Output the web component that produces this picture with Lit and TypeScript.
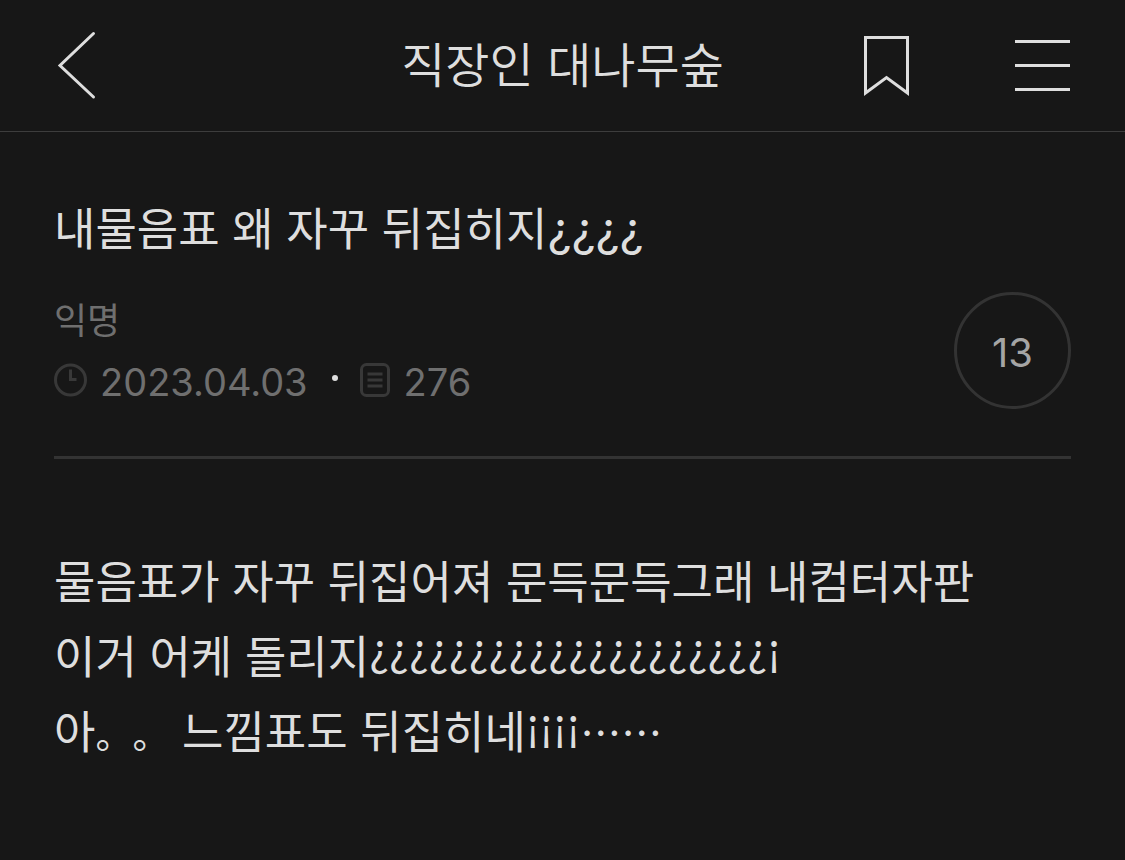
import { LitElement, html, css } from "lit";
import { customElement } from "lit/decorators.js";

@customElement("app-root")
export class AppRoot extends LitElement {
  static styles = css`
    :host { display: block; min-height: 100vh; background: #171717; color: #dedede; font-family: Inter, "Noto Sans CJK KR", sans-serif; font-weight: 400; }
    * { box-sizing: border-box; }
    header { display: grid; grid-template-columns: 1fr auto 1fr; align-items: center; height: 132px; padding: 0 54px; border-bottom: 1px solid #3d3d3d; }
    h1, h2, p { margin: 0; font-weight: inherit; }
    h1 { font-size: 48px; line-height: 72px; font-weight: 350; }
    button { padding: 0; border: 0; background: none; color: inherit; display: flex; font: inherit; cursor: pointer; }
    svg { display: block; fill: none; stroke: currentColor; }
    .back { justify-self: start; }
    .actions { display: flex; justify-content: flex-end; align-items: center; gap: 104px; }
    main { padding: 62px 54px; }
    h2 { font-size: 45px; line-height: 72px; }
    .marks { font-size: 47px; line-height: 0; }
    .info { display: flex; justify-content: space-between; align-items: center; padding: 25px 0 47px; border-bottom: 3px solid #333; }
    .by { color: #6f6f6f; font-size: 36px; line-height: 60px; }
    .meta { display: flex; align-items: center; font-size: 38px; line-height: 54px; color: #6f6f6f; }
    .meta svg { color: #383838; margin-right: 13px; }
    .meta time, .views { padding-top: 4px; }
    .dot { width: 6px; height: 6px; border-radius: 50%; background: #dedede; margin: 0 22px 4px 24px; }
    .count { width: 117px; height: 117px; padding-top: 4px; border: 3px solid #333; border-radius: 50%; align-items: center; justify-content: center; color: #a5a5a5; font-size: 40px; }
    .body { padding-top: 86px; font-size: 45px; line-height: 75px; }
    .raised { font-family: "Noto Sans CJK KR", sans-serif; font-size: 42px; font-weight: 400; line-height: 0; vertical-align: 9px; }
    .stop { font-size: 37px; line-height: 0; text-spacing-trim: space-all; }
    .dots { font-size: 41px; line-height: 0; }
  `;
  render() {
    return html`
      <header>
        <button class="back" aria-label="뒤로"><svg width="45" height="72" viewBox="0 0 45 72" stroke-width="3" stroke-linecap="round"><path d="M39.500 3.500 6 35.500 39.500 67" /></svg></button>
        <h1>직장인 대나무숲</h1>
        <div class="actions">
          <button aria-label="북마크"><svg width="48" height="62" viewBox="0 0 48 62" stroke-width="3"><path d="M3.500 2.500H45.500V58L24.500 42.500 3.500 58Z" /></svg></button>
          <button aria-label="메뉴"><svg width="57" height="54" viewBox="0 0 57 54" stroke-width="3"><path d="M1 2.500H56M1 26.500H56M1 50.500H56" /></svg></button>
        </div>
      </header>
      <main>
        <h2>내물음표 왜 자꾸 뒤집히지<span class="marks">¿¿¿¿</span></h2>
        <div class="info">
          <div>
            <p class="by">익명</p>
            <div class="meta">
              <svg width="33" height="34" viewBox="0 0 33 34" stroke-width="3" aria-hidden="true"><circle cx="16.500" cy="17" r="15" /><path d="M16.500 6.500V16.500H22.500" /></svg>
              <time datetime="2023-04-03">2023.04.03</time>
              <span class="dot"></span>
              <svg width="31" height="34" viewBox="0 0 31 34" stroke-width="3" aria-hidden="true"><rect x="1.500" y="1.500" width="27" height="31" rx="5" /><path d="M7.500 11H22.500M7.500 17H22.500M7.500 23H22.500" /></svg>
              <span class="views">276</span>
            </div>
          </div>
          <button class="count">13</button>
        </div>
        <div class="body">
          <p>물음표가 자꾸 뒤집어져 문득문득그래 내컴터자판</p>
          <p>이거 어케 돌리지<span class="raised">¿¿¿¿¿¿¿¿¿¿¿¿¿¿¿¿¿¿¿¿¡</span></p>
          <p>아<span class="stop">。。</span> 느낌표도 뒤집히네<span class="raised">¡¡¡¡</span><span class="dots">⋯⋯</span></p>
        </div>
      </main>
    `;
  }
}
